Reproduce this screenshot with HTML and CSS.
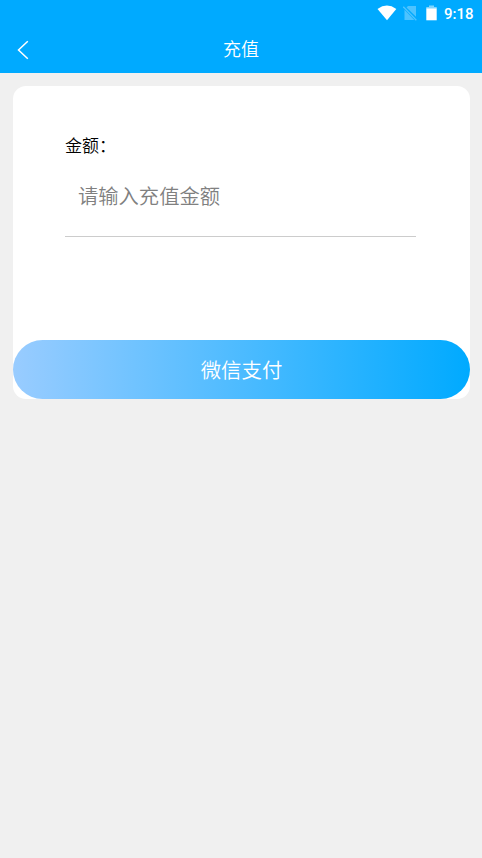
FILE: index.html
```html
<!DOCTYPE html>
<html lang="zh-CN">
<head>
<meta charset="utf-8">
<title>充值</title>
<link rel="stylesheet" href="styles.css">
</head>
<body>
<header class="header">
  <div class="status">
    <svg class="wifi" width="20" height="16" viewBox="0 0 20 16"><path d="M0.5 3.9Q10-2.8 19.3 3.9L10 15.3Z" fill="#fff"/></svg>
    <svg class="sim" width="14" height="16" viewBox="0 0 14 16"><path d="M5 1H13V11.8L3.5 2.5ZM1.5 4.8L11.3 15H1.5Z" fill="#4dc3ff"/><path d="M0.3 1.8L13.3 15.2" stroke="#4dc3ff" stroke-width="1.3"/></svg>
    <svg class="battery" width="11" height="16" viewBox="0 0 11 16"><path d="M0.3 2H3V0.5H8V2H10.7V4H0.3Z" fill="#80d5ff"/><path d="M0.3 3.5H10.7V15.3H0.3Z" fill="#fff"/></svg>
    <span class="time">9:18</span>
  </div>
  <div class="navbar">
    <svg class="back" width="12" height="20" viewBox="0 0 12 20"><path d="M10.8 1.2L1.5 10L10.8 18.8" fill="none" stroke="#fff" stroke-width="1.5"/></svg>
    <h1 class="title">充值</h1>
  </div>
</header>
<main class="card">
  <div class="form">
    <label class="label" for="amount">金额：</label>
    <input class="input" id="amount" placeholder="请输入充值金额">
  </div>
  <button class="pay">微信支付</button>
</main>
</body>
</html>
```

FILE: styles.css
```css
* { box-sizing: border-box; }
body { margin: 0; min-height: 858px; background: #f0f0f0; font-family: "Noto Sans CJK SC", sans-serif; font-weight: 350; }
.header { height: 73px; background: #00aaff; color: #fff; }
.status { height: 26px; display: flex; align-items: center; justify-content: flex-end; padding-right: 8.5px; }
.wifi { margin-right: 6px; }
.sim { margin-right: 9px; }
.battery { margin-right: 6.5px; }
.time { font: 500 15px/26px Roboto, sans-serif; padding-top: 1px; }
.navbar { height: 47px; display: grid; grid-template-columns: 48px 1fr 48px; align-items: center; }
.back { margin-left: 17px; }
.title { margin: 0; padding-bottom: 3px; font-size: 18px; line-height: 26px; font-weight: 350; text-align: center; }
.card { display: flex; flex-direction: column; justify-content: space-between; width: 457px; height: 313px; margin: 13px 0 0 13px; border-radius: 13px; background: #fff; }
.form { display: flex; flex-direction: column; padding: 46px 54px 0 52px; }
.label { font-size: 17px; line-height: 26px; color: #000; }
.input { height: 79px; border: 0; border-bottom: 1px solid #ccc; padding: 0 13px 5px; background: none; font: 350 20.3px "Noto Sans CJK SC", sans-serif; outline: 0; }
.input::placeholder { color: #808080; }
.pay { height: 59px; border: 0; padding: 0 0 2px; border-radius: 30px; background: linear-gradient(90deg, #99ccff, #00aaff); color: #fff; font: 350 20.4px "Noto Sans CJK SC", sans-serif; }
```
